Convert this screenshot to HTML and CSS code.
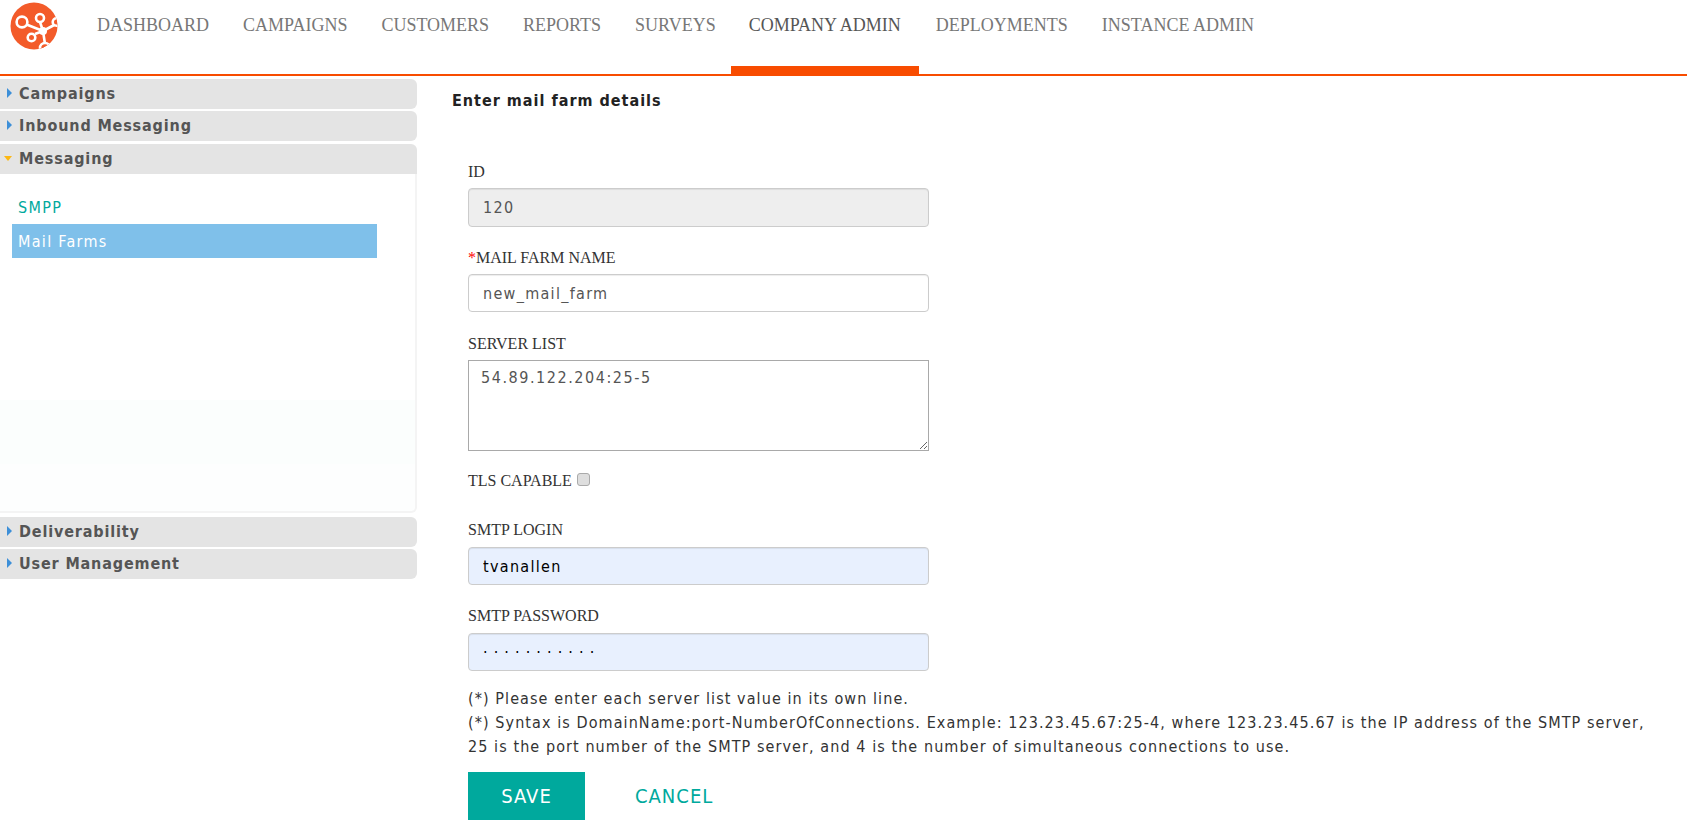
FILE: index.html
```html
<!DOCTYPE html>
<html lang="en">
<head>
<meta charset="utf-8">
<title>Mail Farm Details</title>
<link rel="stylesheet" href="styles.css">
</head>
<body>
<header class="topbar">
  <svg class="logo" width="48" height="48" viewBox="0 0 48 48" aria-label="Logo">
    <defs><clipPath id="disc"><circle cx="24" cy="24" r="23.5"/></clipPath></defs>
    <circle cx="24" cy="24" r="23.5" fill="#f35b2a"/>
    <g clip-path="url(#disc)" fill="none" stroke="#fff" stroke-width="2.6">
      <path d="M16.5 22.5 33 29M30 20 33 29M25 32 33 29M46 22 33 29M35 42 33 29"/>
      <circle cx="12" cy="20" r="5.4" fill="#f35b2a"/>
      <circle cx="30" cy="16" r="4" fill="#f35b2a"/>
      <circle cx="21.5" cy="35.5" r="3.8" fill="#f35b2a"/>
      <circle cx="46.5" cy="20" r="3.8" fill="#f35b2a"/>
      <circle cx="35" cy="46" r="5" fill="#f35b2a"/>
    </g>
    <circle cx="33" cy="29" r="4" fill="#fff"/>
  </svg>
  <nav class="mainnav">
    <a class="navlink">DASHBOARD</a>
    <a class="navlink">CAMPAIGNS</a>
    <a class="navlink">CUSTOMERS</a>
    <a class="navlink">REPORTS</a>
    <a class="navlink">SURVEYS</a>
    <a class="navlink is-active">COMPANY ADMIN</a>
    <a class="navlink">DEPLOYMENTS</a>
    <a class="navlink">INSTANCE ADMIN</a>
  </nav>
</header>
<div class="page">
  <aside class="sidebar">
    <div class="acc-head"><span class="arrow"></span>Campaigns</div>
    <div class="acc-head"><span class="arrow"></span>Inbound Messaging</div>
    <div class="acc-head acc-open"><span class="arrow-down"></span>Messaging</div>
    <div class="acc-panel">
      <a class="side-link">SMPP</a>
      <a class="side-link is-current">Mail Farms</a>
    </div>
    <div class="acc-head"><span class="arrow"></span>Deliverability</div>
    <div class="acc-head"><span class="arrow"></span>User Management</div>
  </aside>
  <main class="content">
    <h1 class="title">Enter mail farm details</h1>
    <form class="form">
      <div class="field"><label class="label">ID</label><input class="input input-disabled" type="text" value="120" disabled></div>
      <div class="field"><label class="label"><span class="req">*</span>MAIL FARM NAME</label><input class="input" type="text" value="new_mail_farm"></div>
      <div class="field"><label class="label">SERVER LIST</label><textarea class="textarea">54.89.122.204:25-5</textarea></div>
      <div class="tls"><label class="label label-inline">TLS CAPABLE</label><input class="check" type="checkbox"></div>
      <div class="field field-login"><label class="label label-high">SMTP LOGIN</label><input class="input input-auto" type="text" value="tvanallen"></div>
      <div class="field field-last"><label class="label label-high">SMTP PASSWORD</label><input class="input input-auto input-dots" type="text" value="···········"></div>
      <p class="notes">(*) Please enter each server list value in its own line.<br>(*) Syntax is DomainName:port-NumberOfConnections. Example: 123.23.45.67:25-4, where 123.23.45.67 is the IP address of the SMTP server, 25 is the port number of the SMTP server, and 4 is the number of simultaneous connections to use.</p>
      <div class="actions">
        <button class="btn-save" type="button">SAVE</button>
        <a class="btn-cancel">CANCEL</a>
      </div>
    </form>
  </main>
</div>
</body>
</html>
```
FILE: styles.css
```css
* { box-sizing: border-box; }
html, body { margin: 0; padding: 0; height: 833px; overflow: hidden; background: #fff; }
body { font-family: "DejaVu Sans", sans-serif; font-stretch: condensed; color: #333; }

.topbar { display: flex; align-items: flex-start; height: 76px; border-bottom: 2px solid #f84c00; padding-left: 10px; }
.logo { flex: none; margin-top: 2px; }
.mainnav { display: flex; height: 74px; margin-left: 22px; }
.navlink { display: block; padding: 14px 17px 0; font: 18px/22px "Liberation Serif", serif; color: #777; }
.navlink.is-active { padding-left: 18px; padding-right: 18px; margin-left: -2px; color: #555; border-bottom: 8px solid #f84c00; }

.page { display: flex; align-items: flex-start; }
.sidebar { flex: none; width: 417px; padding-top: 3px; }
.acc-head { display: flex; align-items: center; height: 30px; margin-bottom: 2px; padding: 0 0 2px 7px; background: #e4e4e4; border-radius: 0 6px 6px 0; font-size: 16px; font-weight: bold; letter-spacing: .85px; color: #555; }
.acc-open { margin: 3px 0 0; border-radius: 0 6px 0 0; }
.arrow { flex: none; width: 0; height: 0; margin-right: 7px; border-style: solid; border-width: 5px 0 5px 5px; border-color: transparent transparent transparent #3d8fd8; }
.arrow-down { flex: none; width: 0; height: 0; margin: 0 7px 0 -3px; border-style: solid; border-width: 5px 4px 0; border-color: #fdb813 transparent transparent; }
.acc-panel { height: 339px; margin-bottom: 4px; padding: 16px 0 0 12px; border-right: 2px solid #f4f4f4; border-bottom: 2px solid #f4f4f4; border-radius: 0 0 6px 0; background: linear-gradient(#fff 0, #fff 226px, #fbfefd 226px, #fbfefd 290px, #fdfefe 290px); }
.side-link { display: block; width: 365px; height: 34px; padding-left: 6px; font-size: 16px; line-height: 36px; color: #00a99d; letter-spacing: 1.3px; }
.side-link.is-current { background: #7fc0ea; color: #fff; }

.content { flex: 1; min-width: 0; padding-left: 35px; }
.title { margin: 14px 0 0; font-size: 16px; line-height: 22px; font-weight: bold; letter-spacing: 1px; color: #222; }
.form { padding: 50px 0 0 16px; }
.field { margin-bottom: 22px; }
.field-login { margin-bottom: 21px; }
.field-last { margin-bottom: 16px; }
.label { display: block; height: 26px; font: 16px/20px "Liberation Serif", serif; color: #333; }
.label-high { height: 27px; }
.label-inline { display: inline-block; }
.req { color: #f00; }
.input { display: block; width: 461px; height: 38px; padding: 0 14px; border: 1px solid #ccc; border-radius: 4px; background: #fff; font: condensed 16px "DejaVu Sans", sans-serif; letter-spacing: 1.3px; color: #555; box-shadow: inset 0 1px 1px rgba(0,0,0,.075); }
.input-disabled { height: 39px; margin-bottom: -1px; background: #eee; color: #555; opacity: 1; }
.input-auto { background: #e8f0fe; color: #000; }
.input-dots { letter-spacing: 6.1px; }
.textarea { display: block; width: 461px; height: 91px; margin: 0; padding: 7px 12px; border: 1px solid #a9a9a9; font: condensed 16px/20px "DejaVu Sans", sans-serif; letter-spacing: 1.55px; color: #555; }
.tls { display: flex; align-items: flex-start; height: 49px; margin-top: -2px; }
.check { appearance: none; width: 13px; height: 13px; margin: 2px 0 0 5px; border: 1px solid #aaa; border-radius: 3px; background: #dedede; }
.notes { max-width: 1200px; margin: 0; font-size: 16px; line-height: 24px; letter-spacing: 1.08px; color: #333; }
.actions { display: flex; align-items: center; margin-top: 13px; }
.btn-save { width: 117px; height: 48px; border: 0; background: #00a99d; color: #fff; font: condensed 20px "DejaVu Sans", sans-serif; letter-spacing: 1px; }
.btn-cancel { margin-left: 50px; font-size: 20px; letter-spacing: 1px; color: #00a99d; }
```
